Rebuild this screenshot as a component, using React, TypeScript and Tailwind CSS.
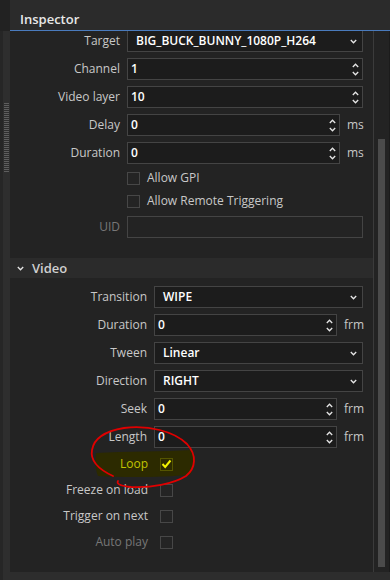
import React from "react";

const Chevron = ({ up }: { up?: boolean }) => (
  <svg width="7" height="5" viewBox="0 0 7 5" className="block">
    <path
      d={up ? "M0.8 4 L3.5 1.2 L6.2 4" : "M0.8 1 L3.5 3.8 L6.2 1"}
      fill="none"
      stroke="#e6e6e6"
      strokeWidth="1.3"
    />
  </svg>
);

const Label = ({ text, w, dim }: { text: string; w: string; dim?: boolean }) => (
  <div className={`${w} shrink-0 text-right ${dim ? "text-[#777777]" : "text-[#c8c8c8]"}`}>{text}</div>
);

const Combo = ({ value }: { value: string }) => (
  <div className="flex-1 h-[22px] bg-[#1c1c1c] border border-[#444444] flex items-center pl-[8px] pr-[5px]">
    <span className="flex-1 text-white font-semibold">{value}</span>
    <Chevron />
  </div>
);

const Spin = ({ value }: { value: string }) => (
  <div className="flex-1 h-[22px] bg-[#1c1c1c] border border-[#444444] flex items-center pl-[3px] pr-[3px]">
    <span className="flex-1 text-white font-semibold">{value}</span>
    <div className="flex flex-col gap-[3px]">
      <Chevron up />
      <Chevron />
    </div>
  </div>
);

const Box = () => <div className="w-[13px] h-[13px] border border-[#474747] bg-[#242424]" />;

function TopRow({ label, children, unit, dim }: { label: string; children?: React.ReactNode; unit?: string; dim?: boolean }) {
  return (
    <div className="flex items-center h-[22px] gap-[7px] pr-[10px]">
      <Label text={label} w="w-[110px]" dim={dim} />
      {children}
      {unit && <span className="w-[16px] shrink-0 text-[#c8c8c8]">{unit}</span>}
    </div>
  );
}

function VidRow({ label, children, unit }: { label: string; children?: React.ReactNode; unit?: string }) {
  return (
    <div className="flex items-center h-[22px] gap-[7px] pr-[10px]">
      <Label text={label} w="w-[137px]" />
      {children}
      {unit && <span className="w-[19px] shrink-0 text-[#c8c8c8]">{unit}</span>}
    </div>
  );
}

function CheckRow({ label, dim, children }: { label: string; dim?: boolean; children?: React.ReactNode }) {
  return (
    <div className="flex items-center h-[26px] gap-[12px]">
      <Label text={label} w="w-[138px]" dim={dim} />
      {children ?? <Box />}
    </div>
  );
}

export default function App() {
  return (
    <div className="w-[390px] h-[580px] bg-[#2b2b2b] flex overflow-hidden relative font-['Open_Sans',sans-serif] text-[12px] leading-none">
      {/* splitter */}
      <div className="w-[10px] shrink-0 flex flex-col">
        <div className="h-[31px] bg-[#222222]" />
        <div className="flex flex-1">
          <div className="w-[3px] bg-[#262626]" />
          <div className="w-[7px] bg-[#2e2e2e] flex flex-col">
            <div className="h-[72px]" />
            <div className="mx-[1px] h-[69px] bg-[repeating-linear-gradient(to_bottom,#5e5e5e_0px,#5e5e5e_1px,#2e2e2e_1px,#2e2e2e_2px)]" />
          </div>
        </div>
      </div>

      <div className="flex-1 flex flex-col">
        <div className="h-[30px] flex items-center pt-[8px] pl-[10px] text-[13px] font-semibold text-[#e8e8e8]">Inspector</div>
        <div className="h-[1px] bg-[#4a7bbd]" />
        <div className="flex flex-1 min-h-0">
          <div className="w-[363px] bg-[#232323] overflow-hidden">
            <div className="mt-[-1px] flex flex-col">
              <div className="flex flex-col gap-[6px]">
                <TopRow label="Target">
                  <Combo value="BIG_BUCK_BUNNY_1080P_H264" />
                </TopRow>
                <TopRow label="Channel">
                  <Spin value="1" />
                </TopRow>
                <TopRow label="Video layer">
                  <Spin value="10" />
                </TopRow>
                <TopRow label="Delay" unit="ms">
                  <Spin value="0" />
                </TopRow>
                <TopRow label="Duration" unit="ms">
                  <Spin value="0" />
                </TopRow>
              </div>
              <div className="mt-[4px] h-[20px] flex items-center pl-[117px] gap-[7px]">
                <div className="w-[13px] h-[13px] border border-[#474747] bg-[#242424]" />
                <span className="text-[#c8c8c8]">Allow GPI</span>
              </div>
              <div className="mt-[3px] h-[20px] flex items-center pl-[117px] gap-[7px]">
                <div className="w-[13px] h-[13px] border border-[#474747] bg-[#242424]" />
                <span className="text-[#c8c8c8]">Allow Remote Triggering</span>
              </div>
              <div className="mt-[5px]">
                <TopRow label="UID" dim>
                  <div className="flex-1 h-[22px] border border-[#444444] bg-[#232323]" />
                </TopRow>
              </div>

              <div className="mt-[20px] h-[20px] bg-[#2b2b2b] flex items-center pl-[7px] gap-[8px] text-[13px] font-semibold text-[#d0d0d0]">
                <Chevron />
                <span>Video</span>
              </div>

              <div className="mt-[8px] flex flex-col gap-[6px]">
                <VidRow label="Transition">
                  <Combo value="WIPE" />
                </VidRow>
                <VidRow label="Duration" unit="frm">
                  <Spin value="0" />
                </VidRow>
                <VidRow label="Tween">
                  <Combo value="Linear" />
                </VidRow>
                <VidRow label="Direction">
                  <Combo value="RIGHT" />
                </VidRow>
                <VidRow label="Seek" unit="frm">
                  <Spin value="0" />
                </VidRow>
                <VidRow label="Length" unit="frm">
                  <Spin value="0" />
                </VidRow>
              </div>
              <div className="mt-[3px] flex flex-col">
                <div className="flex items-center h-[26px] gap-[12px] relative">
                  <svg className="absolute left-[84px] top-[-2px]" width="102" height="30" viewBox="0 0 102 30">
                    <path d="M2 4 C30 2 70 3 98 1 C101 8 100 20 96 26 C70 28 35 29 4 27 C1 20 1 10 2 4 Z" fill="#2c2a00" />
                  </svg>
                  <div className="w-[138px] shrink-0 text-right text-[#c2c400] relative">Loop</div>
                  <div className="w-[13px] h-[13px] border border-[#555500] bg-[#2c2a00] relative flex items-center justify-center">
                    <svg width="11" height="10" viewBox="0 0 11 10">
                      <path d="M1.5 5 L4.2 8 L9.5 1.5" fill="none" stroke="#f2f200" strokeWidth="2" />
                    </svg>
                  </div>
                </div>
                <CheckRow label="Freeze on load" />
                <CheckRow label="Trigger on next" />
                <CheckRow label="Auto play" dim />
              </div>
            </div>
          </div>
          <div className="w-[1px] bg-[#3b3b3b]" />
          <div className="w-[16px] bg-[#232323] flex flex-col border-r border-[#1b1b1b]">
            <div className="h-[108px]" />
            <div className="ml-[4px] w-[7px] h-[428px] bg-[#4b4b4b]" />
          </div>
        </div>
        <div className="h-[8px] bg-[#2d2d2d]" />
      </div>

      {/* red annotation */}
      <svg className="absolute left-0 top-0 pointer-events-none" width="390" height="580">
        <path
          d="M113 476 C100 470 90 461 92 450 C94 438 106 431 124 428 C148 425 174 431 187 444 C197 455 196 468 186 476 C173 484 151 488 131 487 C121 486 116 484 118 481"
          fill="none"
          stroke="#e00000"
          strokeWidth="1.8"
          strokeLinecap="round"
        />
      </svg>
    </div>
  );
}
